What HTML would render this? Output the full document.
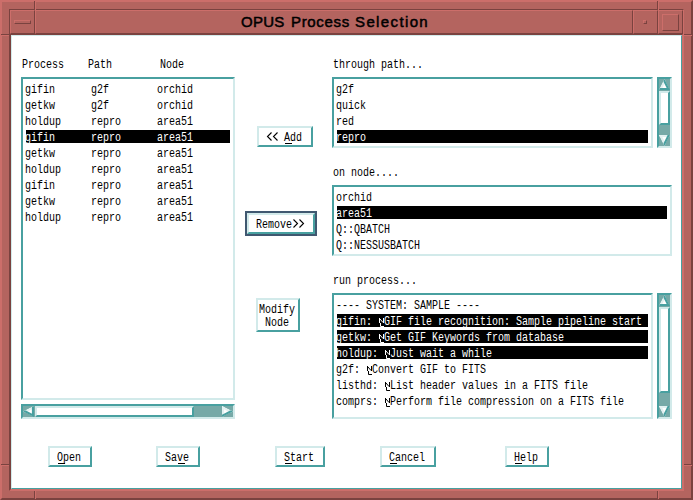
<!DOCTYPE html>
<html><head><meta charset="utf-8"><style>
html,body{margin:0;padding:0;width:693px;height:500px;overflow:hidden;background:#fff}
body>div,body>svg{position:absolute;box-sizing:content-box}
.m{font-family:"Liberation Mono",monospace;font-size:12px;line-height:14px;white-space:pre;transform:scaleX(0.83333);transform-origin:0 0}
.title{font-family:"Liberation Sans",sans-serif;font-weight:normal;font-size:15px;letter-spacing:1px;-webkit-text-stroke:0.5px #000;line-height:20px;white-space:pre;color:#000}
.nl{display:inline-block;width:7.2px;height:10px;vertical-align:baseline}
</style></head><body>
<div style="left:0px;top:0px;width:689px;height:496px;border:2px solid;border-color:#cc6e6a #7a423f #7a423f #cc6e6a;background:#b4645f;"></div>
<div style="left:34px;top:1px;width:1px;height:8px;background:#7a423f;"></div>
<div style="left:35px;top:1px;width:1px;height:8px;background:#cc6e6a;"></div>
<div style="left:34px;top:491px;width:1px;height:8px;background:#7a423f;"></div>
<div style="left:35px;top:491px;width:1px;height:8px;background:#cc6e6a;"></div>
<div style="left:657px;top:1px;width:1px;height:8px;background:#7a423f;"></div>
<div style="left:658px;top:1px;width:1px;height:8px;background:#cc6e6a;"></div>
<div style="left:657px;top:491px;width:1px;height:8px;background:#7a423f;"></div>
<div style="left:658px;top:491px;width:1px;height:8px;background:#cc6e6a;"></div>
<div style="left:1px;top:34px;width:8px;height:1px;background:#7a423f;"></div>
<div style="left:1px;top:35px;width:8px;height:1px;background:#cc6e6a;"></div>
<div style="left:684px;top:34px;width:8px;height:1px;background:#7a423f;"></div>
<div style="left:684px;top:35px;width:8px;height:1px;background:#cc6e6a;"></div>
<div style="left:1px;top:464px;width:8px;height:1px;background:#7a423f;"></div>
<div style="left:1px;top:465px;width:8px;height:1px;background:#cc6e6a;"></div>
<div style="left:684px;top:464px;width:8px;height:1px;background:#7a423f;"></div>
<div style="left:684px;top:465px;width:8px;height:1px;background:#cc6e6a;"></div>
<div style="left:9px;top:9px;width:673px;height:480px;border:1px solid;border-color:#7a423f #cc6e6a #cc6e6a #7a423f;"></div>
<div style="left:10px;top:10px;width:23px;height:22px;border:1px solid;border-color:#cc6e6a #7a423f #7a423f #cc6e6a;"></div>
<div style="left:35px;top:10px;width:596px;height:22px;border:1px solid;border-color:#cc6e6a #7a423f #7a423f #cc6e6a;"></div>
<div style="left:633px;top:10px;width:23px;height:22px;border:1px solid;border-color:#cc6e6a #7a423f #7a423f #cc6e6a;"></div>
<div style="left:658px;top:10px;width:23px;height:22px;border:1px solid;border-color:#cc6e6a #7a423f #7a423f #cc6e6a;"></div>
<div style="left:14px;top:20px;width:15px;height:2px;border:1px solid;border-color:#cc6e6a #7a423f #7a423f #cc6e6a;"></div>
<div style="left:643px;top:20px;width:2px;height:2px;border:1px solid;border-color:#cc6e6a #7a423f #7a423f #cc6e6a;"></div>
<div style="left:662px;top:14px;width:15px;height:15px;border:1px solid;border-color:#cc6e6a #7a423f #7a423f #cc6e6a;"></div>
<div style="left:35px;top:1px;width:1px;height:32px;background:#cc6e6a;"></div>
<div style="left:658px;top:1px;width:1px;height:32px;background:#cc6e6a;"></div>
<div style="left:10px;top:34px;width:671px;height:454px;border:1px solid;border-color:#7a423f #cc6e6a #cc6e6a #7a423f;"></div>
<div style="left:11px;top:35px;width:669px;height:452px;border:1px solid;border-color:#d2eaea #48a0a0 #48a0a0 #d2eaea;background:#fff;"></div>
<div class="title" style="left:241px;top:12px;letter-spacing:0.25px">OPUS</div>
<div class="title" style="left:291px;top:12px;letter-spacing:0.67px">Process</div>
<div class="title" style="left:355px;top:12px;letter-spacing:1.375px">Selection</div>
<div class="m" style="left:22px;top:58px;color:#000">Process</div>
<div class="m" style="left:88px;top:58px;color:#000">Path</div>
<div class="m" style="left:160px;top:58px;color:#000">Node</div>
<div class="m" style="left:333px;top:58px;color:#000">through path...</div>
<div class="m" style="left:333px;top:166px;color:#000">on node....</div>
<div class="m" style="left:333px;top:274px;color:#000">run process...</div>
<div style="left:21px;top:77px;width:210px;height:319px;border:2px solid;border-color:#48a0a0 #d2eaea #d2eaea #48a0a0;background:#fff;"></div>
<div class="m" style="left:25px;top:83px;color:#000">gifin      g2f        orchid</div>
<div class="m" style="left:25px;top:99px;color:#000">getkw      g2f        orchid</div>
<div class="m" style="left:25px;top:115px;color:#000">holdup     repro      area51</div>
<div style="left:26px;top:130px;width:204px;height:13px;background:#000;"></div>
<div class="m" style="left:25px;top:131px;color:#fff">gifin      repro      area51</div>
<div class="m" style="left:25px;top:147px;color:#000">getkw      repro      area51</div>
<div class="m" style="left:25px;top:163px;color:#000">holdup     repro      area51</div>
<div class="m" style="left:25px;top:179px;color:#000">gifin      repro      area51</div>
<div class="m" style="left:25px;top:195px;color:#000">getkw      repro      area51</div>
<div class="m" style="left:25px;top:211px;color:#000">holdup     repro      area51</div>
<div style="left:21px;top:404px;width:210px;height:11px;border:2px solid;border-color:#48a0a0 #d2eaea #d2eaea #48a0a0;background:#76a9a7;"></div>
<svg style="left:23px;top:406px" width="11" height="11"><defs><clipPath id="c1"><polygon points="0,5.5 11,0 11,11"/></clipPath></defs><g clip-path="url(#c1)"><polygon points="0,5.5 11,0 11,11" fill="#fff"/><line x1="0" y1="5.5" x2="11" y2="0" stroke="#e2f1f1" stroke-width="4.2"/><line x1="11" y1="0" x2="11" y2="11" stroke="#48a0a0" stroke-width="4.2"/><line x1="11" y1="11" x2="0" y2="5.5" stroke="#48a0a0" stroke-width="4.2"/></g></svg>
<svg style="left:222px;top:406px" width="11" height="11"><defs><clipPath id="c2"><polygon points="0,0 0,11 11,5.5"/></clipPath></defs><g clip-path="url(#c2)"><polygon points="0,0 0,11 11,5.5" fill="#fff"/><line x1="0" y1="0" x2="0" y2="11" stroke="#e2f1f1" stroke-width="4.2"/><line x1="0" y1="0" x2="11" y2="5.5" stroke="#e2f1f1" stroke-width="4.2"/><line x1="0" y1="11" x2="11" y2="5.5" stroke="#48a0a0" stroke-width="4.2"/></g></svg>
<div style="left:35px;top:406px;width:155px;height:7px;border:2px solid;border-color:#d2eaea #48a0a0 #48a0a0 #d2eaea;background:#fff;"></div>
<div style="left:332px;top:77px;width:317px;height:67px;border:2px solid;border-color:#48a0a0 #d2eaea #d2eaea #48a0a0;background:#fff;"></div>
<div class="m" style="left:336px;top:83px;color:#000">g2f</div>
<div class="m" style="left:336px;top:99px;color:#000">quick</div>
<div class="m" style="left:336px;top:115px;color:#000">red</div>
<div style="left:337px;top:130px;width:311px;height:13px;background:#000;"></div>
<div class="m" style="left:336px;top:131px;color:#fff">repro</div>
<div style="left:657px;top:77px;width:11px;height:67px;border:2px solid;border-color:#48a0a0 #d2eaea #d2eaea #48a0a0;background:#76a9a7;"></div>
<svg style="left:659px;top:79px" width="11" height="11"><defs><clipPath id="c3"><polygon points="5.5,0 0,11 11,11"/></clipPath></defs><g clip-path="url(#c3)"><polygon points="5.5,0 0,11 11,11" fill="#fff"/><line x1="5.5" y1="0" x2="0" y2="11" stroke="#e2f1f1" stroke-width="4.2"/><line x1="0" y1="11" x2="11" y2="11" stroke="#48a0a0" stroke-width="4.2"/><line x1="11" y1="11" x2="5.5" y2="0" stroke="#48a0a0" stroke-width="4.2"/></g></svg>
<svg style="left:659px;top:135px" width="11" height="11"><defs><clipPath id="c4"><polygon points="0,0 11,0 5.5,11"/></clipPath></defs><g clip-path="url(#c4)"><polygon points="0,0 11,0 5.5,11" fill="#fff"/><line x1="0" y1="0" x2="11" y2="0" stroke="#e2f1f1" stroke-width="4.2"/><line x1="0" y1="0" x2="5.5" y2="11" stroke="#e2f1f1" stroke-width="4.2"/><line x1="11" y1="0" x2="5.5" y2="11" stroke="#48a0a0" stroke-width="4.2"/></g></svg>
<div style="left:659px;top:91px;width:7px;height:30px;border:2px solid;border-color:#d2eaea #48a0a0 #48a0a0 #d2eaea;background:#fff;"></div>
<div style="left:332px;top:185px;width:336px;height:67px;border:2px solid;border-color:#48a0a0 #d2eaea #d2eaea #48a0a0;background:#fff;"></div>
<div class="m" style="left:336px;top:191px;color:#000">orchid</div>
<div style="left:337px;top:206px;width:330px;height:13px;background:#000;"></div>
<div class="m" style="left:336px;top:207px;color:#fff">area51</div>
<div class="m" style="left:336px;top:223px;color:#000">Q::QBATCH</div>
<div class="m" style="left:336px;top:239px;color:#000">Q::NESSUSBATCH</div>
<div style="left:332px;top:293px;width:317px;height:122px;border:2px solid;border-color:#48a0a0 #d2eaea #d2eaea #48a0a0;background:#fff;"></div>
<div class="m" style="left:336px;top:299px;color:#000">---- SYSTEM: SAMPLE ----</div>
<div style="left:337px;top:314px;width:311px;height:13px;background:#000;"></div>
<svg style="left:379px;top:318px" width="6" height="10" fill="none" stroke="#fff" stroke-width="1"><path d="M0.5,5 V0 M4.5,5 V0 M1,1 L4,4.5 M1.5,5 V8.5 H5"/></svg>
<div class="m" style="left:336px;top:315px;color:#fff">gifin:  GIF file recognition: Sample pipeline start</div>
<div style="left:337px;top:330px;width:311px;height:13px;background:#000;"></div>
<svg style="left:379px;top:334px" width="6" height="10" fill="none" stroke="#fff" stroke-width="1"><path d="M0.5,5 V0 M4.5,5 V0 M1,1 L4,4.5 M1.5,5 V8.5 H5"/></svg>
<div class="m" style="left:336px;top:331px;color:#fff">getkw:  Get GIF Keywords from database</div>
<div style="left:337px;top:346px;width:311px;height:13px;background:#000;"></div>
<svg style="left:385px;top:350px" width="6" height="10" fill="none" stroke="#fff" stroke-width="1"><path d="M0.5,5 V0 M4.5,5 V0 M1,1 L4,4.5 M1.5,5 V8.5 H5"/></svg>
<div class="m" style="left:336px;top:347px;color:#fff">holdup:  Just wait a while</div>
<svg style="left:367px;top:366px" width="6" height="10" fill="none" stroke="#000" stroke-width="1"><path d="M0.5,5 V0 M4.5,5 V0 M1,1 L4,4.5 M1.5,5 V8.5 H5"/></svg>
<div class="m" style="left:336px;top:363px;color:#000">g2f:  Convert GIF to FITS</div>
<svg style="left:385px;top:382px" width="6" height="10" fill="none" stroke="#000" stroke-width="1"><path d="M0.5,5 V0 M4.5,5 V0 M1,1 L4,4.5 M1.5,5 V8.5 H5"/></svg>
<div class="m" style="left:336px;top:379px;color:#000">listhd:  List header values in a FITS file</div>
<svg style="left:385px;top:398px" width="6" height="10" fill="none" stroke="#000" stroke-width="1"><path d="M0.5,5 V0 M4.5,5 V0 M1,1 L4,4.5 M1.5,5 V8.5 H5"/></svg>
<div class="m" style="left:336px;top:395px;color:#000">comprs:  Perform file compression on a FITS file</div>
<div style="left:657px;top:293px;width:11px;height:122px;border:2px solid;border-color:#48a0a0 #d2eaea #d2eaea #48a0a0;background:#76a9a7;"></div>
<svg style="left:659px;top:295px" width="11" height="11"><defs><clipPath id="c5"><polygon points="5.5,0 0,11 11,11"/></clipPath></defs><g clip-path="url(#c5)"><polygon points="5.5,0 0,11 11,11" fill="#fff"/><line x1="5.5" y1="0" x2="0" y2="11" stroke="#e2f1f1" stroke-width="4.2"/><line x1="0" y1="11" x2="11" y2="11" stroke="#48a0a0" stroke-width="4.2"/><line x1="11" y1="11" x2="5.5" y2="0" stroke="#48a0a0" stroke-width="4.2"/></g></svg>
<svg style="left:659px;top:406px" width="11" height="11"><defs><clipPath id="c6"><polygon points="0,0 11,0 5.5,11"/></clipPath></defs><g clip-path="url(#c6)"><polygon points="0,0 11,0 5.5,11" fill="#fff"/><line x1="0" y1="0" x2="11" y2="0" stroke="#e2f1f1" stroke-width="4.2"/><line x1="0" y1="0" x2="5.5" y2="11" stroke="#e2f1f1" stroke-width="4.2"/><line x1="11" y1="0" x2="5.5" y2="11" stroke="#48a0a0" stroke-width="4.2"/></g></svg>
<div style="left:659px;top:307px;width:7px;height:82px;border:2px solid;border-color:#d2eaea #48a0a0 #48a0a0 #d2eaea;background:#fff;"></div>
<div style="left:257px;top:126px;width:52px;height:17px;border:2px solid;border-color:#d2eaea #48a0a0 #48a0a0 #d2eaea;background:#fff;"></div>
<div class="m" style="left:266px;top:131px;color:#000">   Add</div>
<div style="left:285px;top:143px;width:7px;height:1px;background:#000;"></div>
<svg style="left:0;top:0" width="693" height="500"><path d="M271.5,132.5 L267.5,136.5 L271.5,140.5" fill="none" stroke="#000" stroke-width="1.1"/></svg>
<svg style="left:0;top:0" width="693" height="500"><path d="M277.5,132.5 L273.5,136.5 L277.5,140.5" fill="none" stroke="#000" stroke-width="1.1"/></svg>
<div style="left:245px;top:211px;width:72px;height:25px;background:#405870;"></div>
<div style="left:247px;top:213px;width:64px;height:17px;border:2px solid;border-color:#d2eaea #48a0a0 #48a0a0 #d2eaea;background:#fff;"></div>
<div class="m" style="left:256px;top:218px;color:#000">Remove  </div>
<svg style="left:0;top:0" width="693" height="500"><path d="M293.5,219.5 L297.5,223.5 L293.5,227.5" fill="none" stroke="#000" stroke-width="1.1"/></svg>
<svg style="left:0;top:0" width="693" height="500"><path d="M299.5,219.5 L303.5,223.5 L299.5,227.5" fill="none" stroke="#000" stroke-width="1.1"/></svg>
<div style="left:256px;top:298px;width:40px;height:30px;border:2px solid;border-color:#d2eaea #48a0a0 #48a0a0 #d2eaea;background:#fff;"></div>
<div class="m" style="left:259px;top:303px;color:#000">Modify</div>
<div class="m" style="left:265px;top:316px;color:#000">Node</div>
<div style="left:48px;top:446px;width:40px;height:17px;border:2px solid;border-color:#d2eaea #48a0a0 #48a0a0 #d2eaea;background:#fff;"></div>
<div class="m" style="left:57px;top:451px;color:#000">Open</div>
<div style="left:58px;top:463px;width:7px;height:1px;background:#000;"></div>
<div style="left:156px;top:446px;width:40px;height:17px;border:2px solid;border-color:#d2eaea #48a0a0 #48a0a0 #d2eaea;background:#fff;"></div>
<div class="m" style="left:165px;top:451px;color:#000">Save</div>
<div style="left:178px;top:463px;width:7px;height:1px;background:#000;"></div>
<div style="left:275px;top:446px;width:46px;height:17px;border:2px solid;border-color:#d2eaea #48a0a0 #48a0a0 #d2eaea;background:#fff;"></div>
<div class="m" style="left:284px;top:451px;color:#000">Start</div>
<div style="left:285px;top:463px;width:7px;height:1px;background:#000;"></div>
<div style="left:380px;top:446px;width:52px;height:17px;border:2px solid;border-color:#d2eaea #48a0a0 #48a0a0 #d2eaea;background:#fff;"></div>
<div class="m" style="left:389px;top:451px;color:#000">Cancel</div>
<div style="left:390px;top:463px;width:7px;height:1px;background:#000;"></div>
<div style="left:505px;top:446px;width:40px;height:17px;border:2px solid;border-color:#d2eaea #48a0a0 #48a0a0 #d2eaea;background:#fff;"></div>
<div class="m" style="left:514px;top:451px;color:#000">Help</div>
<div style="left:515px;top:463px;width:7px;height:1px;background:#000;"></div>
</body></html>
